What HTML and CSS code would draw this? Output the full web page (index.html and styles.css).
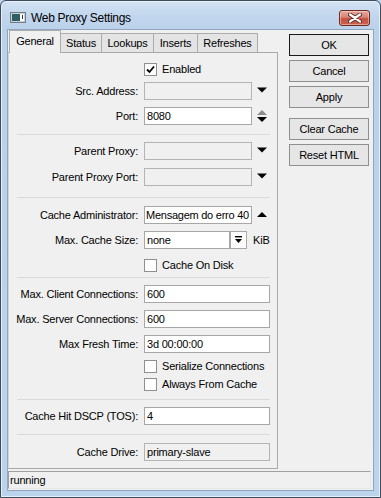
FILE: index.html
```html
<!DOCTYPE html>
<html>
<head>
<meta charset="utf-8">
<title>Web Proxy Settings</title>
<link rel="stylesheet" href="styles.css">
</head>
<body>
<div class="window">
  <div class="titlebar">
    <svg class="app-icon" width="16" height="11" viewBox="0 0 16 11">
      <rect x="0.5" y="0.5" width="15" height="10" fill="#c9d2d8" stroke="#6f7c86"/>
      <rect x="2" y="2" width="8" height="7" fill="#2f5f63"/>
      <rect x="10" y="2" width="4" height="7" fill="#ffffff"/>
      <rect x="12" y="3" width="1" height="4" fill="#333"/>
    </svg>
    <span class="title">Web Proxy Settings</span>
    <div class="close">
      <svg width="14" height="10" viewBox="0 0 14 10">
        <path d="M2 1.5 L12 8.5 M12 1.5 L2 8.5" stroke="#5a2a25" stroke-width="4" stroke-linecap="round"/>
        <path d="M2 1.5 L12 8.5 M12 1.5 L2 8.5" stroke="#ffffff" stroke-width="2.2" stroke-linecap="round"/>
      </svg>
    </div>
  </div>
  <div class="client">
    <div class="main">
      <div class="tabarea">
        <div class="tabs">
          <div class="tab active t-general">General</div>
          <div class="tab t-status">Status</div>
          <div class="tab t-lookups">Lookups</div>
          <div class="tab t-inserts">Inserts</div>
          <div class="tab t-refreshes">Refreshes</div>
        </div>
        <div class="panel">
          <div class="section s1">
            <div class="row">
              <span class="label"></span>
              <span class="cb"><svg width="11" height="11" viewBox="0 0 11 11"><path d="M2 5.5 L4.5 8 L9 2.5" fill="none" stroke="#000" stroke-width="1.8"/></svg></span>
              <span class="cb-text">Enabled</span>
            </div>
            <div class="row gap4">
              <span class="label">Src. Address:</span>
              <span class="input disabled w-arrow"></span>
              <svg class="arrow" width="10" height="18" viewBox="0 0 10 18"><polygon points="0,5.5 10,5.5 5,10.5" fill="#000"/></svg>
            </div>
            <div class="row">
              <span class="label">Port:</span>
              <span class="input w-arrow">8080</span>
              <svg class="arrow" width="10" height="18" viewBox="0 0 10 18"><polygon points="0,8 10,8 5,3" fill="#8c8c8c"/><polygon points="0,10 10,10 5,15" fill="#000"/></svg>
            </div>
          </div>
          <div class="sep"></div>
          <div class="section s2">
            <div class="row">
              <span class="label">Parent Proxy:</span>
              <span class="input disabled w-arrow"></span>
              <svg class="arrow" width="10" height="18" viewBox="0 0 10 18"><polygon points="0,5.5 10,5.5 5,10.5" fill="#000"/></svg>
            </div>
            <div class="row gap8">
              <span class="label">Parent Proxy Port:</span>
              <span class="input disabled w-arrow"></span>
              <svg class="arrow" width="10" height="18" viewBox="0 0 10 18"><polygon points="0,5.5 10,5.5 5,10.5" fill="#000"/></svg>
            </div>
          </div>
          <div class="sep"></div>
          <div class="section s3">
            <div class="row">
              <span class="label">Cache Administrator:</span>
              <span class="input w-arrow tight">Mensagem do erro 40</span>
              <svg class="arrow" width="10" height="18" viewBox="0 0 10 18"><polygon points="0,11 10,11 5,6" fill="#000"/></svg>
            </div>
            <div class="row">
              <span class="label">Max. Cache Size:</span>
              <span class="input w-size">none</span>
              <span class="minibtn"><svg width="7" height="8" viewBox="0 0 7 8"><rect x="0" y="0" width="7" height="1.4" fill="#000"/><polygon points="0,3 7,3 3.5,7" fill="#000"/></svg></span>
              <span class="unit">KiB</span>
            </div>
            <div class="row">
              <span class="label"></span>
              <span class="cb"></span>
              <span class="cb-text">Cache On Disk</span>
            </div>
          </div>
          <div class="sep"></div>
          <div class="section s4">
            <div class="row">
              <span class="label">Max. Client Connections:</span>
              <span class="input w-full">600</span>
            </div>
            <div class="row">
              <span class="label">Max. Server Connections:</span>
              <span class="input w-full">600</span>
            </div>
            <div class="row">
              <span class="label">Max Fresh Time:</span>
              <span class="input w-full">3d 00:00:00</span>
            </div>
            <div class="row gap4">
              <span class="label"></span>
              <span class="cb"></span>
              <span class="cb-text">Serialize Connections</span>
            </div>
            <div class="row gap0">
              <span class="label"></span>
              <span class="cb"></span>
              <span class="cb-text">Always From Cache</span>
            </div>
          </div>
          <div class="sep"></div>
          <div class="section s5">
            <div class="row">
              <span class="label">Cache Hit DSCP (TOS):</span>
              <span class="input w-full">4</span>
            </div>
          </div>
          <div class="sep"></div>
          <div class="section s6">
            <div class="row">
              <span class="label">Cache Drive:</span>
              <span class="input disabled w-full">primary-slave</span>
            </div>
          </div>
        </div>
      </div>
      <div class="buttons">
        <div class="btn default">OK</div>
        <div class="btn">Cancel</div>
        <div class="btn">Apply</div>
        <div class="btn group">Clear Cache</div>
        <div class="btn">Reset HTML</div>
      </div>
    </div>
    <div class="statusbar">running</div>
  </div>
</div>
</body>
</html>
```

FILE: styles.css
```css
* { box-sizing: border-box; }

html, body {
  margin: 0;
  padding: 0;
  background: #bcd3ec;
}

body {
  font-family: "Liberation Sans", Arial, sans-serif;
  font-size: 11px;
  letter-spacing: -0.2px;
  color: #000;
}

.window {
  width: 381px;
  height: 498px;
  border: 1px solid #3d4c5c;
  border-radius: 6px 6px 0 0;
  background: linear-gradient(#d3e2f3 0px, #c2d7ee 14px, #bad1ea 30px, #bcd3ec 100%);
  padding: 0 7px 7px 7px;
  display: flex;
  flex-direction: column;
  box-shadow: inset 0 0 0 1px #e6eef8;
}

.titlebar {
  height: 29px;
  display: flex;
  align-items: flex-start;
  flex: none;
}

.app-icon {
  margin: 11px 0 0 2px;
  flex: none;
}

.title {
  margin: 10px 0 0 5px;
  font-size: 12px;
  letter-spacing: -0.3px;
  line-height: 14px;
  flex: 1;
}

.close {
  width: 31px;
  height: 16px;
  margin: 9px 3px 0 0;
  border: 1px solid #6e2b24;
  border-radius: 3px;
  background: linear-gradient(#e6aa9f 0%, #d88273 45%, #c6503f 55%, #c8644f 100%);
  display: flex;
  align-items: center;
  justify-content: center;
  box-shadow: inset 0 0 0 1px rgba(255, 220, 210, 0.5);
}

.client {
  flex: 1;
  background: #f0f0f0;
  display: flex;
  flex-direction: column;
  box-shadow: 0 0 0 1px #8fa6bf;
}

.main {
  height: 439px;
  flex: none;
  display: flex;
}

.tabarea {
  width: 270px;
  display: flex;
  flex-direction: column;
}

.tabs {
  height: 22px;
  display: flex;
  align-items: flex-end;
  padding-left: 1px;
  position: relative;
  z-index: 1;
}

.tab {
  height: 19px;
  border: 1px solid #acacac;
  border-left: none;
  border-bottom: none;
  background: #e4e4e4;
  text-align: center;
  line-height: 18px;
  flex: none;
}

.tab.active {
  height: 23px;
  margin-bottom: -1px;
  background: #f0f0f0;
  border-left: 1px solid #acacac;
  line-height: 20px;
}

.t-general { width: 52px; }
.t-status { width: 41px; }
.t-lookups { width: 52px; }
.t-inserts { width: 44px; }
.t-refreshes { width: 60px; }

.panel {
  height: 417px;
  border: 1px solid #a9a9a9;
  border-left-color: #d4d4d4;
  display: flex;
  flex-direction: column;
}

.section {
  display: flex;
  flex-direction: column;
}

.s1 { padding: 7px 0 9px; }
.s2 { padding: 7px 0 11px; }
.s3 { padding: 8px 0 3px; }
.s4 { padding: 7px 0 6px; }
.s5 { padding: 7px 0 9px; }
.s6 { padding: 8px 0 7px; }

.sep {
  height: 1px;
  background: #dadada;
  margin: 0 7px 0 8px;
  flex: none;
}

.row {
  height: 18px;
  display: flex;
  align-items: center;
  flex: none;
}

.row + .row { margin-top: 7px; }
.row.gap4 { margin-top: 4px; }
.row.gap8 { margin-top: 8px; }
.row.gap0 { margin-top: 0; }

.label {
  width: 129px;
  margin-right: 6px;
  text-align: right;
  white-space: nowrap;
  flex: none;
}

.input {
  height: 18px;
  border: 1px solid #a7a7a7;
  background: #fff;
  padding-left: 2px;
  line-height: 16px;
  white-space: nowrap;
  overflow: hidden;
  flex: none;
}

.input.tight {
  padding-left: 1px;
  letter-spacing: -0.25px;
}

.input.disabled {
  background: #f0f0f0;
  border-color: #b4b4b4;
}

.w-arrow { width: 108px; }
.w-full { width: 126px; }
.w-size { width: 86px; }

.arrow {
  margin-left: 5px;
  flex: none;
}

.minibtn {
  width: 17px;
  height: 18px;
  border: 1px solid #a7a7a7;
  background: #fcfcfc;
  display: flex;
  align-items: center;
  justify-content: center;
  flex: none;
}

.unit {
  margin-left: 6px;
}

.cb {
  width: 13px;
  height: 13px;
  border: 1px solid #8e8f8f;
  background: #fff;
  display: flex;
  align-items: center;
  justify-content: center;
  flex: none;
}

.cb-text {
  margin-left: 5px;
}

.buttons {
  width: 80px;
  margin-left: 11px;
  padding-top: 4px;
  display: flex;
  flex-direction: column;
  gap: 4px;
}

.btn {
  height: 22px;
  border: 1px solid #8f8f8f;
  background: #e6e6e6;
  text-align: center;
  line-height: 20px;
}

.btn.default {
  border-color: #1a1a1a;
}

.btn.group {
  margin-top: 6px;
}

.statusbar {
  height: 18px;
  margin: 2px 2px 0 0;
  border: 1px solid #a0a0a0;
  border-right-color: #e8e8e8;
  border-bottom-color: #e8e8e8;
  padding-left: 1px;
  line-height: 16px;
}
```
